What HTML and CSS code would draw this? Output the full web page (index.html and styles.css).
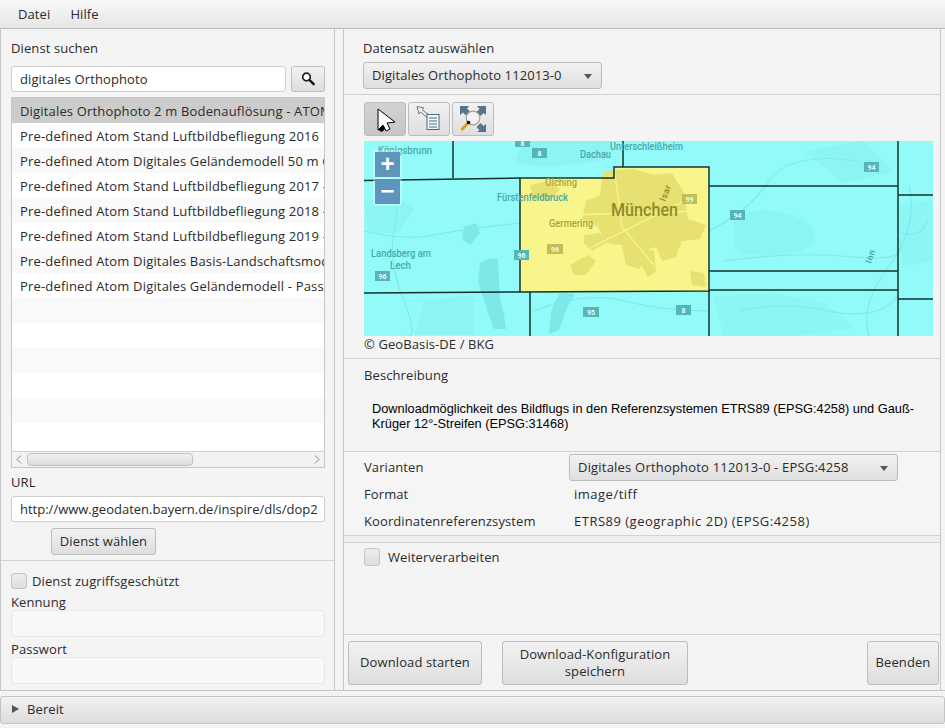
FILE: index.html
```html
<!DOCTYPE html>
<html lang="de">
<head>
<meta charset="utf-8">
<title>Download-Client</title>
<link rel="stylesheet" href="styles.css">
</head>
<body>
<div class="app">
  <nav class="menubar"><span class="menu">Datei</span><span class="menu">Hilfe</span></nav>
  <main class="split">
    <section class="left">
      <div class="left-top">
        <div class="lbl">Dienst suchen</div>
        <div class="search-row">
          <div class="input grow">digitales Orthophoto</div>
          <button class="btn search-btn"><svg width="16" height="16" viewBox="0 0 16 16"><circle cx="6.500" cy="6" r="3.800" fill="#fff" stroke="#222" stroke-width="1.700"/><path d="M9.500 9l4.200 4.200" stroke="#111" stroke-width="2.400" stroke-linecap="round"/></svg></button>
        </div>
        <div class="list">
          <div class="rows">
            <div class="row sel">Digitales Orthophoto 2 m Bodenauflösung - ATOM</div>
            <div class="row">Pre-defined Atom Stand Luftbildbefliegung 2016</div>
            <div class="row odd">Pre-defined Atom Digitales Geländemodell 50 m Gitterweite</div>
            <div class="row">Pre-defined Atom Stand Luftbildbefliegung 2017 - ATOM</div>
            <div class="row odd">Pre-defined Atom Stand Luftbildbefliegung 2018 - ATOM</div>
            <div class="row">Pre-defined Atom Stand Luftbildbefliegung 2019 - ATOM</div>
            <div class="row odd">Pre-defined Atom Digitales Basis-Landschaftsmodell</div>
            <div class="row">Pre-defined Atom Digitales Geländemodell - Passau</div>
            <div class="row odd"></div><div class="row"></div><div class="row odd"></div><div class="row"></div><div class="row odd"></div><div class="row"></div>
          </div>
          <div class="hscroll">
            <svg class="arrow" width="6" height="9" viewBox="0 0 6 9"><path d="M5 .5L1 4.500l4 4" fill="none" stroke="#888"/></svg>
            <div class="track"><div class="thumb"></div></div>
            <svg class="arrow" width="6" height="9" viewBox="0 0 6 9"><path d="M1 .5l4 4-4 4" fill="none" stroke="#888"/></svg>
          </div>
        </div>
        <div class="lbl url-lbl">URL</div>
        <div class="input url">http://www.geodaten.bayern.de/inspire/dls/dop2</div>
        <div class="choose"><button class="btn choose-btn">Dienst wählen</button></div>
      </div>
      <div class="left-bottom">
        <label class="check"><span class="box"></span>Dienst zugriffsgeschützt</label>
        <div class="lbl auth-lbl">Kennung</div>
        <div class="input off"></div>
        <div class="lbl auth-lbl pw">Passwort</div>
        <div class="input off"></div>
      </div>
    </section>
    <div class="divider"></div>
    <section class="right">
      <div class="block pick">
        <div class="lbl">Datensatz auswählen</div>
        <div class="combo c1">Digitales Orthophoto 112013-0<i class="caret"></i></div>
      </div>
      <div class="block mapblock">
        <div class="tools">
          <button class="btn tool on"><svg width="24" height="28" viewBox="0 0 24 28"><path d="M5 4l17 13-8 1 3 6-4 2-3-6-5 5z" fill="#fff" stroke="#000"/><path d="M5 25l5-5 2 4-3 3z" fill="#000"/></svg></button>
          <button class="btn tool"><svg width="30" height="28" viewBox="0 0 30 28"><path d="M3 1.500l7 1.500-2 1.800 6.500 4.700-2 2.500L6.500 7 5 9z" fill="#eee" stroke="#777"/><rect x="13" y="9.500" width="12" height="15" fill="#f4f7f9" stroke="#4a6a80"/><path d="M15 13h8M15 16h8M15 19h8M15 22h8" stroke="#4a6a80"/></svg></button>
          <button class="btn tool"><svg width="28" height="28" viewBox="0 0 28 28"><path d="M1 1h9L8 3.500l3 3L7 10.500l-3-3L1 10zM27 1v9l-2.500-2-3 3L17.500 7l3-3L18 1zM27 27h-9l2.500-2-3-3 4-4 3 3 2.500-2z" fill="#56748c"/><circle cx="14" cy="13" r="6.800" fill="#f2f2f2" stroke="#a0a0a0" stroke-width="1.200"/><path d="M9 18L2.500 25" stroke="#d9a021" stroke-width="3"/><circle cx="9.500" cy="17.500" r="1.800" fill="#111"/></svg></button>
        </div>
        <div class="map">
          <svg class="mapsvg" viewBox="0 0 569 195" width="569" height="195">
            <rect width="569" height="195" fill="#92fbfa"/>
            <g fill="#7de8e8">
              <path d="M116 122q8-6 18-4l2 40 4 16 2 14-12 0-8-22-8-26z"/>
              <path d="M196 152l15 1-8 14-8 22-10 4 2-22 4-10z"/>
              <path d="M370 80q20-16 50-8t30 24-40 18-40-12z" opacity=".35"/>
              <path d="M0 60l30-6 20 14-14 22-30 4z" opacity=".3"/>
              <path d="M160 0h90l-10 20-60 6-30-4z" opacity=".3"/>
              <path d="M440 10l60-10 30 30-50 12z" opacity=".3"/>
              <path d="M60 160l50-6 0 40-60 0z" opacity=".3"/>
              <path d="M350 155l60-3 50 10 30 25-60 8-70 0z" opacity=".25"/>
              <path d="M535 65l34-6v60l-30 8z" opacity=".25"/>
              <path d="M100 86l12-4 4 10-10 12-8-6z"/>
            </g>
            <g fill="none" stroke="#80e9e9" stroke-width="1.200">
              <path d="M0 90q40 10 70 4t86-12"/>
              <path d="M30 20q6 40 0 70t10 70 0 35"/>
              <path d="M345 90q40-20 60-50t90-20"/>
              <path d="M360 120q70-10 130-4t44-20"/>
              <path d="M505 195q-10-30 20-70t20-80"/>
              <path d="M534 90q20 10 30-10"/>
              <path d="M375 170q40-10 90 0t69-15"/>
              <path d="M170 170q50-20 90-10t85 10"/>
            </g>
            <path d="M156 37h94V26h95v124l-189 1z" fill="#f8f68a"/>
            <g fill="#e6e170">
              <path d="M240 30l30-2 20 6 18-2 12 20 4 26 18 6-6 14-18 2-6 16-14 4-6-14-12 4-4 18-14-4-4-20-16-2-8-16-16-8 4-18 14-6 2-18z"/>
              <path d="M166 44l18-4 12 8-10 12-16-2z"/>
              <path d="M220 94l16-2 6 10-14 8-8-8z"/>
              <path d="M206 124l18-10 8 6-10 14-12 0z"/>
              <path d="M278 108l12 2 2 20-8 6-8-14z"/>
              <path d="M326 130l14 2 2 14-14-2z"/>
            </g>
            <g fill="none" stroke="#f8f68a" stroke-width="1.300"><path d="M250 26l8 60 50 60M170 75l170-5M200 120l80-40 60-30"/></g>
            <g fill="none" stroke="#14302f" stroke-width="1.500">
              <path d="M156 37h94V26h95v124l-189 1V37z"/>
              <path d="M0 39.500l156-2.500M89 0v37M259 0v26M345 45h189M534 0v195M345 150v45M345 130h189M345 149h189M534 54h35M534 158h35M0 152l156-1M166 151v44"/>
            </g>
            <g fill="#55b5b8">
              <rect x="151" y="0" width="15" height="6"/><rect x="168" y="7" width="15" height="10"/>
              <rect x="500" y="21" width="15" height="10"/><rect x="366" y="69" width="15" height="10"/>
              <rect x="150" y="109" width="15" height="10"/><rect x="11" y="130" width="15" height="10"/>
              <rect x="219" y="166" width="16" height="10"/><rect x="312" y="164" width="15" height="10"/>
            </g>
            <g fill="#c5bd58"><rect x="318" y="53" width="15" height="10"/><rect x="183" y="103" width="16" height="10"/></g>
            <g class="shield" fill="#e6ffff" text-anchor="middle">
              <text x="158.500" y="5">8</text><text x="175.500" y="15">8</text><text x="507.500" y="29">94</text><text x="373.500" y="77">94</text><text x="157.500" y="117">96</text><text x="18.500" y="138">96</text><text x="227" y="174">95</text><text x="319.500" y="172">8</text><text x="325.500" y="61">99</text><text x="191" y="111">96</text>
            </g>
            <g class="place" fill="#4aa8aa">
              <text x="14" y="13" textLength="54" lengthAdjust="spacingAndGlyphs">Königsbrunn</text><text x="216" y="17" textLength="31" lengthAdjust="spacingAndGlyphs">Dachau</text><text x="246" y="9" textLength="73" lengthAdjust="spacingAndGlyphs">Unterschleißheim</text><text x="133" y="60" textLength="71" lengthAdjust="spacingAndGlyphs">Fürstenfeldbruck</text><text x="7" y="116" textLength="60" lengthAdjust="spacingAndGlyphs">Landsberg am</text><text x="26" y="128" textLength="21" lengthAdjust="spacingAndGlyphs">Lech</text>
            </g>
            <g class="place" fill="#a6a63c">
              <text x="181" y="45" textLength="32" lengthAdjust="spacingAndGlyphs">Olching</text><text x="185" y="86" textLength="44" lengthAdjust="spacingAndGlyphs">Germering</text>
            </g>
            <text class="city" x="247" y="75" fill="#8f8c28" textLength="67" lengthAdjust="spacingAndGlyphs">München</text>
            <text class="river" transform="translate(301 61) rotate(-68)" fill="#8f8c28">Isar</text>
            <text class="river" transform="translate(507 123) rotate(-72)" fill="#3f9fa3">Inn</text>
          </svg>
          <div class="zoomctl"><span class="zb">+</span><span class="zb">−</span></div>
        </div>
        <div class="copy">© GeoBasis-DE / BKG</div>
      </div>
      <div class="block descblock">
        <div class="lbl">Beschreibung</div>
        <p class="desc">Downloadmöglichkeit des Bildflugs in den Referenzsystemen ETRS89 (EPSG:4258) und Gauß-Krüger 12°-Streifen (EPSG:31468)</p>
      </div>
      <div class="block props">
        <div class="prop"><span class="key">Varianten</span><div class="combo c2">Digitales Orthophoto 112013-0 - EPSG:4258<i class="caret"></i></div></div>
        <div class="prop"><span class="key">Format</span><span class="val">image/tiff</span></div>
        <div class="prop"><span class="key">Koordinatenreferenzsystem</span><span class="val">ETRS89 (geographic 2D) (EPSG:4258)</span></div>
      </div>
      <div class="gap-strip"></div>
      <div class="block further">
        <label class="check"><span class="box big"></span>Weiterverarbeiten</label>
      </div>
      <div class="actions">
        <button class="btn act a1">Download starten</button>
        <button class="btn act a2">Download-Konfiguration speichern</button>
        <button class="btn act a3">Beenden</button>
      </div>
    </section>
  </main>
  <footer class="status"><div class="status-bar"><i class="tri"></i>Bereit</div></footer>
</div>
</body>
</html>
```
FILE: styles.css
```css
* { box-sizing: border-box; }
html, body { margin: 0; padding: 0; }
body { width: 945px; height: 728px; overflow: hidden; background: #f4f4f4; color: #2b2b2b; font: 13px/16px "Open Sans", sans-serif; letter-spacing: .1px; }
.app { display: flex; flex-direction: column; height: 728px; }

.menubar { flex: 0 0 29px; display: flex; align-items: center; padding: 0 0 0 18px; gap: 20px; background: linear-gradient(#f8f8f8, #e6e6e6); border-bottom: 1px solid #bdbdbd; }

.split { flex: 0 0 662px; display: flex; border-bottom: 1px solid #c4c4c4; }
.left { flex: 0 0 335px; min-width: 0; display: flex; flex-direction: column; border-left: 1px solid #c8c8c8; border-right: 1px solid #c8c8c8; }
.divider { flex: 0 0 8px; background: #f4f4f4; }
.right { flex: 0 0 598px; min-width: 0; display: flex; flex-direction: column; border-left: 1px solid #c8c8c8; border-right: 1px solid #c8c8c8; }

.left-top { flex: 0 0 532px; padding: 11px 9px 0 10px; border-bottom: 1px solid #d2d2d2; }
.left-bottom { flex: 1; padding: 12px 9px 0 10px; }
.lbl { line-height: 16px; }

.search-row { display: flex; gap: 5px; margin-top: 10px; }
.grow { flex: 1; }
.input { height: 26px; padding: 0 8px; line-height: 25px; background: #fff; border: 1px solid #d0d0d0; border-radius: 3px; white-space: nowrap; overflow: hidden; }
.off { height: 27px; background: #f8f8f8; border-color: #e8e8e8; }

.btn { font: inherit; letter-spacing: inherit; color: inherit; padding: 0; border: 1px solid #bcbcbc; border-radius: 3px; background: linear-gradient(#f2f2f2, #dedede); display: flex; align-items: center; justify-content: center; }
.search-btn { flex: 0 0 34px; height: 26px; }

.list { margin-top: 5px; height: 371px; border: 1px solid #c6c6c6; display: flex; flex-direction: column; background: #fff; overflow: hidden; }
.rows { flex: 1; overflow: hidden; }
.row { height: 25px; line-height: 27px; padding-left: 8px; white-space: nowrap; overflow: hidden; background: #fff; letter-spacing: .17px; }
.row.odd { background: #f9f9f9; }
.row.sel { background: #cccccc; }
.hscroll { flex: 0 0 16px; display: flex; align-items: center; gap: 5px; padding: 0 4px; background: #f2f2f2; border-top: 1px solid #d0d0d0; }
.track { flex: 1; }
.thumb { width: 166px; height: 13px; border: 1px solid #c0c0c0; border-radius: 4px; background: linear-gradient(#f2f2f2, #dcdcdc); }
.arrow { flex: none; }

.url-lbl { margin-top: 6px; }
.url { margin-top: 6px; letter-spacing: 0; }
.choose { margin-top: 6px; padding-left: 40px; }
.choose-btn { width: 105px; height: 27px; padding-bottom: 2px; }

.check { display: flex; align-items: center; gap: 5px; }
.box { width: 16px; height: 16px; border: 1px solid #c4c4c4; border-radius: 3px; background: linear-gradient(#ededed, #dddddd); }
.box.big { width: 16px; height: 18px; }
.further .check { gap: 8px; }
.auth-lbl { margin-top: 5px; height: 16px; }
.pw { margin-top: 4px; }

.block { padding: 0 0 0 20px; border-bottom: 1px solid #d2d2d2; }
.pick { flex: 0 0 66px; padding-top: 11px; padding-left: 19px; }
.combo { position: relative; display: flex; align-items: center; padding: 0 0 2px 8px; border: 1px solid #bcbcbc; border-radius: 3px; background: linear-gradient(#f2f2f2, #dedede); height: 27px; }
.c1 { width: 239px; margin-top: 6px; }
.c2 { width: 329px; letter-spacing: .2px; }
.caret { position: absolute; right: 9px; top: 11px; width: 0; height: 0; border: 4.500px solid transparent; border-top: 5px solid #555; border-bottom: 0; }

.mapblock { flex: 0 0 264px; padding-top: 7px; }
.tools { display: flex; gap: 2px; height: 34px; }
.tool { width: 42px; height: 34px; }
.tool.on { background: linear-gradient(#d2d2d2, #c6c6c6); }
.map { position: relative; width: 569px; height: 195px; margin-top: 5px; overflow: hidden; }
.mapsvg { display: block; }
.zoomctl { position: absolute; left: 9px; top: 9px; width: 29px; padding: 2px; display: flex; flex-direction: column; gap: 2px; background: rgba(255,255,255,.35); border-radius: 3px; }
.zb { height: 25px; background: #5e95bd; color: #fff; font: 700 24px/24px "Liberation Sans", sans-serif; text-align: center; }
.copy { line-height: 16px; }
.shield { font: 700 7px "Roboto", sans-serif; letter-spacing: 0; }
.place { font: 500 10px "Roboto", sans-serif; letter-spacing: 0; }
.city { font: 500 18px "Roboto", sans-serif; letter-spacing: 0; }
.river { font: 500 9px "Roboto", sans-serif; letter-spacing: .5px; }

.descblock { flex: 0 0 93px; padding-top: 8px; }
.desc { margin: 18px 20px 0 8px; font: 12.800px/15px "Liberation Sans", sans-serif; letter-spacing: 0; color: #000; }

.props { flex: 0 0 84px; padding-top: 2px; background: #f5f5f5; }
.prop { display: flex; align-items: center; height: 27px; }
.key { flex: 0 0 205px; margin-bottom: 2px; }
.val { margin-bottom: 2px; letter-spacing: .5px; }
.prop:not(:first-child) .val { margin-left: 5px; }
.gap-strip { flex: 0 0 7px; background: #f0f0f0; border-bottom: 1px solid #d2d2d2; }
.further { flex: 1; padding-top: 5px; }
.actions { flex: 0 0 55px; display: flex; align-items: center; padding: 0 1px 0 4px; }
.act { height: 44px; text-align: center; line-height: 17px; }
.a1 { width: 134px; }
.a2 { width: 186px; margin-left: 20px; padding: 0 14px; }
.a3 { width: 72px; margin-left: auto; }

.status { flex: 1; padding-top: 5px; }
.status-bar { height: 28px; display: flex; align-items: center; padding: 0 0 2px 11px; gap: 8px; background: linear-gradient(#f2f2f2, #dcdcdc); border: 1px solid #c4c4c4; border-radius: 3px; }
.tri { width: 0; height: 0; border-left: 7px solid #555; border-top: 4.500px solid transparent; border-bottom: 4.500px solid transparent; }
```
